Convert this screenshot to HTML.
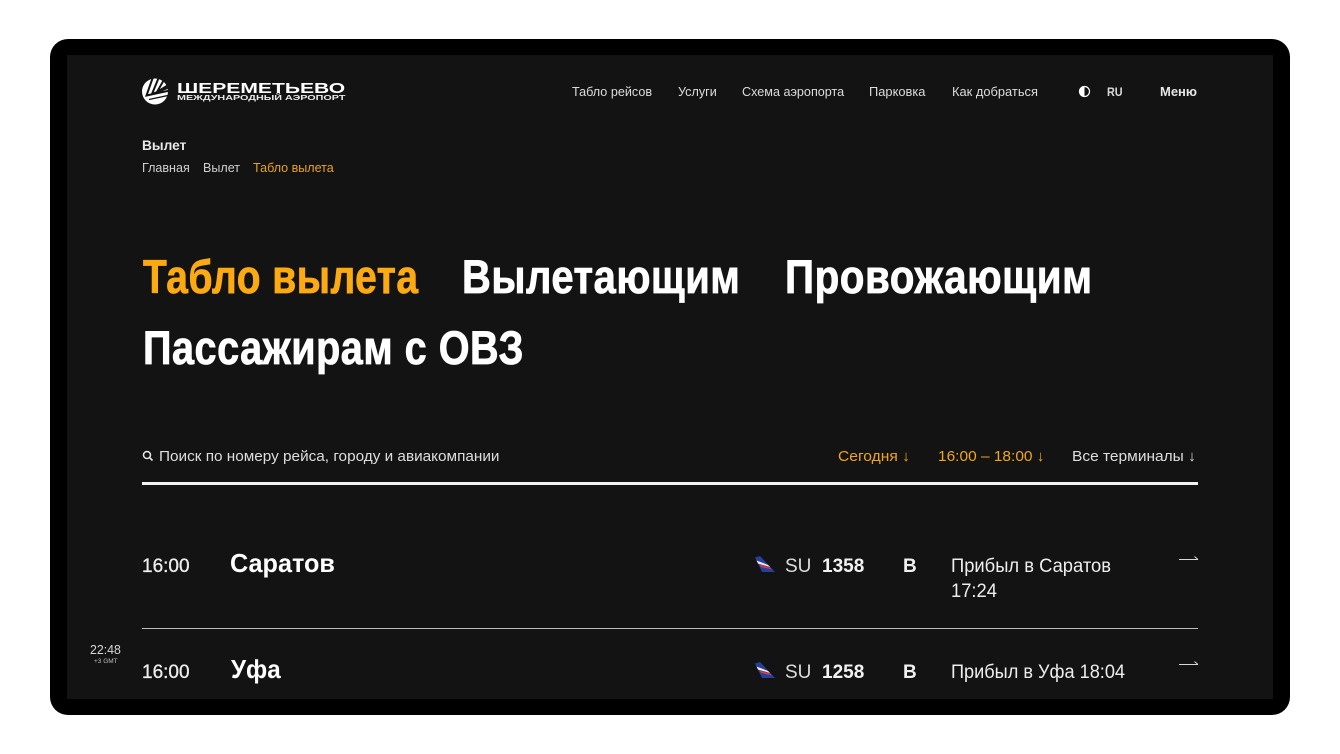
<!DOCTYPE html>
<html lang="ru"><head><meta charset="utf-8"><title>Табло вылета</title>
<style>
html,body{margin:0;padding:0;background:#fff;width:1340px;height:754px;overflow:hidden}
body{font-family:"Liberation Sans",sans-serif;position:relative;color:#e6e6e6}
#frame{position:absolute;left:50px;top:39px;width:1240px;height:676px;background:#000;border-radius:18px}
#screen{position:absolute;left:67px;top:55px;width:1206px;height:644px;background:#131313}
.t{position:absolute;white-space:nowrap;transform-origin:0 0;line-height:1}
.nav{font-size:13px;top:85px;color:#dcdcdc;transform:scaleX(.97)}
.h{font-size:47px;font-weight:700;color:#fff;-webkit-text-stroke:.8px currentColor;letter-spacing:.6px}
.o{color:#fcaa12}
.f{font-size:15px;top:449px;color:#dedede}
.r{font-size:19px;color:#eee}
.b{font-weight:700;color:#f2f2f2}
.w{transform:scaleX(.965)}
.line{position:absolute;left:142px;width:1056px}
svg{position:absolute}
</style></head><body>
<div id="frame"></div><div id="screen"></div>

<svg style="left:141px;top:78px" width="29" height="27" viewBox="0 0 29 27">
<circle cx="14" cy="13.5" r="13" fill="#fff"/>
<path d="M12 -1L5.5 17.5L29 12.5M18 -1L11 16L29 9M24 0L16 14L29 6" stroke="#131313" stroke-width="2" fill="none"/>
<path d="M8 21.5L29 17" stroke="#131313" stroke-width="1.4" fill="none"/>
</svg>
<div class="t" style="left:177px;top:81px;font-size:15px;font-weight:700;color:#fff;transform:scaleX(1.405)">ШЕРЕМЕТЬЕВО</div>
<div class="t" style="left:177px;top:95px;font-size:7px;font-weight:700;color:#e8e8e8;transform:scaleX(1.54)">МЕЖДУНАРОДНЫЙ АЭРОПОРТ</div>

<div class="t nav" style="left:572px">Табло рейсов</div>
<div class="t nav" style="left:678px">Услуги</div>
<div class="t nav" style="left:742px">Схема аэропорта</div>
<div class="t nav" style="left:869px;transform:scaleX(.99)">Парковка</div>
<div class="t nav" style="left:952px;transform:scaleX(.99)">Как добраться</div>
<svg style="left:1078px;top:85px" width="13" height="13" viewBox="0 0 13 13"><circle cx="6.5" cy="6.5" r="5" fill="none" stroke="#fff" stroke-width="1.2"/><path d="M6.5 1.5a5 5 0 0 0 0 10z" fill="#fff"/></svg>
<div class="t" style="left:1107px;top:86px;font-size:12px;font-weight:700;color:#dcdcdc;transform:scaleX(.9)">RU</div>
<div class="t" style="left:1160px;top:85px;font-size:13px;font-weight:700;color:#e6e6e6">Меню</div>

<div class="t" style="left:142px;top:138px;font-size:14px;font-weight:700;color:#e8e8e8;transform:scaleX(.98)">Вылет</div>
<div class="t w" style="left:142px;top:161px;font-size:13px;color:#cfcfcf">Главная</div>
<div class="t w" style="left:203px;top:161px;font-size:13px;color:#cfcfcf">Вылет</div>
<div class="t w" style="left:253px;top:161px;font-size:13px;color:#e9a31a">Табло вылета</div>

<div class="t h o" style="left:143px;top:253px;transform:scaleX(.828)">Табло вылета</div>
<div class="t h" style="left:462px;top:253px;transform:scaleX(.85)">Вылетающим</div>
<div class="t h" style="left:785px;top:253px;transform:scaleX(.86)">Провожающим</div>
<div class="t h" style="left:143px;top:324px;transform:scaleX(.843)">Пассажирам с ОВЗ</div>

<svg style="left:142px;top:450px" width="12" height="12" viewBox="0 0 12 12"><circle cx="5" cy="5" r="3.5" fill="none" stroke="#e8e8e8" stroke-width="1.5"/><path d="M7.6 7.6L10.5 10.5" stroke="#e8e8e8" stroke-width="1.6"/></svg>
<div class="t f" style="left:159px;transform:scaleX(1.021)">Поиск по номеру рейса, городу и авиакомпании</div>
<div class="t f" style="left:838px;color:#f0a51a;transform:scaleX(1.04)">Сегодня ↓</div>
<div class="t f" style="left:938px;color:#f0a51a;transform:scaleX(1.03)">16:00 – 18:00 ↓</div>
<div class="t f" style="left:1072px;transform:scaleX(1.033)">Все терминалы ↓</div>
<div class="line" style="top:482px;height:3px;background:#f2f2f2"></div>

<div class="t r" style="left:142px;top:557px;-webkit-text-stroke:.3px currentColor">16:00</div>
<div class="t b" style="left:230px;top:550px;font-size:26px;color:#fff;transform:scaleX(.97)">Саратов</div>
<svg style="left:754px;top:556px" width="22" height="17" viewBox="0 0 22 17"><path d="M1 1.5L6 0L21 16L8 16Z" fill="#24409c"/><path d="M2.5 4.5L14 9L16 11L4 7.5Z" fill="#f0f0f0"/><path d="M5 8L16 11.5L18 13.5L7 11Z" fill="#d03a44"/></svg>
<div class="t r" style="left:785px;top:557px;color:#ddd">SU</div>
<div class="t b r" style="left:822px;top:557px">1358</div>
<div class="t b r" style="left:903px;top:557px">B</div>
<div class="t r" style="left:951px;top:557px;transform:scaleX(.967)">Прибыл в Саратов</div>
<div class="t r" style="left:951px;top:582px;transform:scaleX(.967)">17:24</div>
<svg style="left:1178px;top:553px" width="22" height="12" viewBox="0 0 22 12"><path d="M1 6.5H20M16.5 3.5L20 6.5" stroke="#d8d8d8" stroke-width="1" fill="none"/></svg>

<div class="line" style="top:628px;height:1px;background:#bdbdbd"></div>

<div class="t" style="left:90px;top:643px;font-size:13px;color:#d6d6d6;transform:scaleX(.95)">22:48</div>
<div class="t" style="left:94px;top:659px;font-size:6.5px;color:#bdbdbd">+3 GMT</div>

<div class="t r" style="left:142px;top:663px;-webkit-text-stroke:.3px currentColor">16:00</div>
<div class="t b" style="left:231px;top:656px;font-size:26px;color:#fff;transform:scaleX(.93)">Уфа</div>
<svg style="left:754px;top:662px" width="22" height="17" viewBox="0 0 22 17"><path d="M1 1.5L6 0L21 16L8 16Z" fill="#24409c"/><path d="M2.5 4.5L14 9L16 11L4 7.5Z" fill="#f0f0f0"/><path d="M5 8L16 11.5L18 13.5L7 11Z" fill="#d03a44"/></svg>
<div class="t r" style="left:785px;top:663px;color:#ddd">SU</div>
<div class="t b r" style="left:822px;top:663px">1258</div>
<div class="t b r" style="left:903px;top:663px">B</div>
<div class="t r" style="left:951px;top:663px;transform:scaleX(.955)">Прибыл в Уфа 18:04</div>
<svg style="left:1178px;top:658px" width="22" height="12" viewBox="0 0 22 12"><path d="M1 6.5H20M16.5 3.5L20 6.5" stroke="#d8d8d8" stroke-width="1" fill="none"/></svg>
</body></html>
